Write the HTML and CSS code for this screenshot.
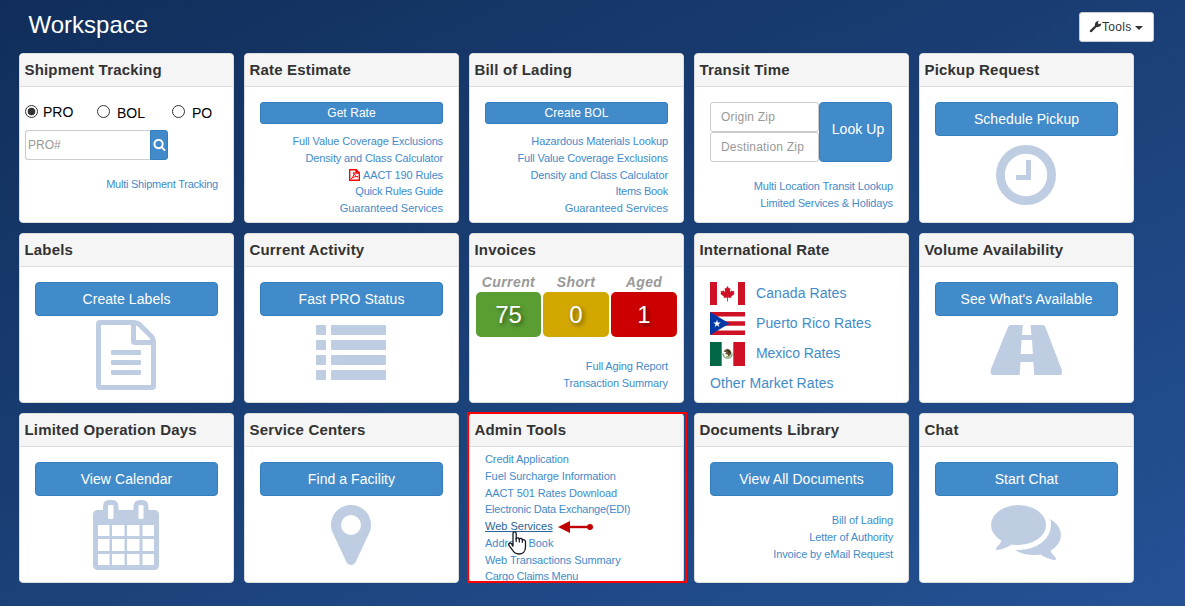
FILE: index.html
```html
<!DOCTYPE html>
<html lang="en">
<head>
<meta charset="utf-8">
<title>Workspace</title>
<link rel="stylesheet" href="styles.css">
</head>
<body>
<header class="topbar">
  <h1 class="title">Workspace</h1>
  <button class="tools"><svg class="wrench" viewBox="0 0 13 13"><path d="M1 10.2 6 5.6C5.6 3.2 7.2.9 9.8.7L8.8 2.6 9.7 4.2 12.3 3.6C12.4 6.1 10 7.7 7.6 7.1L2.8 12C1.6 12.8.2 11.4 1 10.2z"/></svg><span>Tools</span><span class="caret"></span></button>
</header>
<main class="grid">
  <section class="card">
    <h2 class="head">Shipment Tracking</h2>
    <div class="body tracking">
      <div class="radios">
        <label class="radio"><span class="dot on"></span>PRO</label>
        <label class="radio low"><span class="dot"></span>BOL</label>
        <label class="radio low last"><span class="dot"></span>PO</label>
      </div>
      <div class="search">
        <div class="field pro">PRO#</div>
        <button class="go"><svg viewBox="0 0 1792 1792"><path d="M1216 832q0-185-131.5-316.5t-316.5-131.5-316.5 131.5-131.5 316.5 131.5 316.5 316.5 131.5 316.5-131.5 131.5-316.5zm512 832q0 52-38 90t-90 38q-54 0-90-38l-343-342q-179 124-399 124-143 0-273.5-55.5t-225-150-150-225-55.5-273.5 55.5-273.5 150-225 225-150 273.5-55.5 273.5 55.5 225 150 150 225 55.5 273.5q0 220-124 399l343 343q37 37 37 90z"/></svg></button>
      </div>
      <div class="links multi"><a class="tight">Multi Shipment Tracking</a></div>
    </div>
  </section>
  <section class="card">
    <h2 class="head">Rate Estimate</h2>
    <div class="body">
      <button class="btn small">Get Rate</button>
      <div class="links">
        <a>Full Value Coverage Exclusions</a>
        <a>Density and Class Calculator</a>
        <a><svg class="pdf" viewBox="0 0 11 12"><path d="M.7.7H7.2L10.3 3.8V11.3H.7z M7 .9V4H10.2" stroke-width="1.4"/><path d="M2.2 9.8C4 8.8 5 6 4.9 3.2 5.2 6 6.6 7.6 8.9 7.8 6.4 7.3 4.4 7.8 2.2 9.8" stroke-width="1"/></svg>AACT 190 Rules</a>
        <a class="tight">Quick Rules Guide</a>
        <a class="loose">Guaranteed Services</a>
      </div>
    </div>
  </section>
  <section class="card">
    <h2 class="head">Bill of Lading</h2>
    <div class="body">
      <button class="btn small">Create BOL</button>
      <div class="links">
        <a>Hazardous Materials Lookup</a>
        <a>Full Value Coverage Exclusions</a>
        <a>Density and Class Calculator</a>
        <a class="tight">Items Book</a>
        <a class="loose">Guaranteed Services</a>
      </div>
    </div>
  </section>
  <section class="card">
    <h2 class="head">Transit Time</h2>
    <div class="body">
      <div class="transit">
        <div class="zips">
          <div class="field">Origin Zip</div>
          <div class="field">Destination Zip</div>
        </div>
        <button class="btn lookup">Look Up</button>
      </div>
      <div class="links pair">
        <a>Multi Location Transit Lookup</a>
        <a>Limited Services &amp; Holidays</a>
      </div>
    </div>
  </section>
  <section class="card">
    <h2 class="head">Pickup Request</h2>
    <div class="body">
      <button class="btn">Schedule Pickup</button>
      <svg class="icon" viewBox="0 0 71 70"><circle cx="35" cy="35" r="25.6" fill="none" stroke="#bfcde3" stroke-width="8.8"/><path d="M36 20h3q1 0 1 1v18q0 1-1 1H26q-1 0-1-1v-3q0-1 1-1h9V21q0-1 1-1z"/></svg>
    </div>
  </section>

  <section class="card">
    <h2 class="head">Labels</h2>
    <div class="body">
      <button class="btn">Create Labels</button>
      <svg class="icon" viewBox="0 0 71 70"><path fill-rule="evenodd" d="M9 0H43Q47 0 50 2.500L62.500 15Q65 18 65 22V66Q65 70 61 70H9Q5 70 5 66V4Q5 0 9 0zM10 5V65H60V25H44Q40 25 40 21V5zM45 5.500V20H59.500Q59 18.500 58 17.500L47.500 7Q46.500 6 45 5.500z"/><rect x="20" y="30" width="30" height="5" rx="1"/><rect x="20" y="40" width="30" height="5" rx="1"/><rect x="20" y="50" width="30" height="5" rx="1"/></svg>
    </div>
  </section>
  <section class="card">
    <h2 class="head">Current Activity</h2>
    <div class="body">
      <button class="btn">Fast PRO Status</button>
      <svg class="icon" viewBox="0 0 71 70"><rect y="5" width="10" height="10" rx="1"/><rect x="15" y="5" width="55" height="10" rx="1"/><rect y="20" width="10" height="10" rx="1"/><rect x="15" y="20" width="55" height="10" rx="1"/><rect y="35" width="10" height="10" rx="1"/><rect x="15" y="35" width="55" height="10" rx="1"/><rect y="50" width="10" height="10" rx="1"/><rect x="15" y="50" width="55" height="10" rx="1"/></svg>
    </div>
  </section>
  <section class="card">
    <h2 class="head">Invoices</h2>
    <div class="body invoices">
      <div class="stats">
        <div class="stat"><span class="stat-label">Current</span><span class="stat-box green">75</span></div>
        <div class="stat"><span class="stat-label">Short</span><span class="stat-box gold">0</span></div>
        <div class="stat"><span class="stat-label">Aged</span><span class="stat-box red">1</span></div>
      </div>
      <div class="links aging">
        <a>Full Aging Report</a>
        <a>Transaction Summary</a>
      </div>
    </div>
  </section>
  <section class="card">
    <h2 class="head">International Rate</h2>
    <div class="body rates">
      <a class="rate"><svg class="flag" viewBox="0 0 35 23"><path fill="#fff" d="M0 0h35v23H0z"/><path fill="#cf1126" d="M0 0h7v23H0zM28 0h7v23h-7zM17.500 4l1.500 2.600 1.400-.6-.5 4 2-1.800.5 1 2-.3-.6 2 .9.800-3.700 3 .3 1.400-3.400-.5v4h-.8v-4l-3.400.5.3-1.400-3.700-3 .9-.8-.6-2 2 .3.500-1 2 1.800-.5-4 1.400.6z"/></svg>Canada Rates</a>
      <a class="rate"><svg class="flag" viewBox="0 0 35 23"><path fill="#fff" d="M0 0h35v23H0z"/><path fill="#cf1126" d="M0 0h35v4.600H0zM0 9.200h35v4.600H0zM0 18.400h35V23H0z"/><path fill="#0038a8" d="M0 0l19.500 11.500L0 23z"/><path fill="#fff" d="M7 7.700l.95 2.700h2.850l-2.300 1.750.85 2.850L7 13.300 4.650 15l.85-2.850L3.200 10.400h2.850z"/></svg>Puerto Rico Rates</a>
      <a class="rate mexico"><svg class="flag tall" viewBox="0 0 35 24"><path fill="#fff" d="M0 0h35v24H0z"/><path fill="#006847" d="M0 0h11.700v24H0z"/><path fill="#cf1126" d="M23.300 0H35v24H23.300z"/><path fill="none" stroke="#6fa878" stroke-width="1.300" d="M13 11.500a4.600 4.600 0 0 0 9.200 0"/><path fill="#69512f" d="M13.500 9.500q2-3 5-2.600l2 1.600 1 2.500-1.200 2.500-2 1-.8-2-2.500-.4 1.500-1.600z"/><path fill="#2f3425" d="M17 7.500l3 1.500.8 2.500-2-.5z"/><path fill="#b8a36b" d="M16 14h3.500v1.300H16z"/></svg>Mexico Rates</a>
      <a class="rate">Other Market Rates</a>
    </div>
  </section>
  <section class="card">
    <h2 class="head">Volume Availability</h2>
    <div class="body">
      <button class="btn">See What's Available</button>
      <svg class="icon" viewBox="0 0 71 70"><path fill-rule="evenodd" d="M19.500 5H52Q53.500 5 54.200 6.500L70.500 49Q72 55 69.500 55H43.200L42.300 42H29.500L28.600 55H1.500Q-1.500 55 0 49L17 7Q17.700 5 19.500 5zM31.800 5L31 15H40.400L39.600 5zM30.600 20L29.700 34H41.900L41 20z"/></svg>
    </div>
  </section>

  <section class="card">
    <h2 class="head">Limited Operation Days</h2>
    <div class="body">
      <button class="btn">View Calendar</button>
      <svg class="icon" viewBox="0 0 71 70"><path fill-rule="evenodd" d="M7 10H12V7Q12 0 18 0H21Q27.500 0 27.500 7V10H42.500V7Q42.500 0 49 0H51Q57.500 0 57.500 7V10H63Q68 10 68 15V65Q68 70 63 70H7Q2 70 2 65V15Q2 10 7 10zM18 5Q17 5 17 6V18Q17 19 18 19H21Q22.500 19 22.500 18V6Q22.500 5 21 5zM48.500 5Q47.500 5 47.500 6V18Q47.500 19 48.500 19H51.500Q52.500 19 52.500 18V6Q52.500 5 51.500 5zM7 25V36H18.500V25zM21 25V36H33.500V25zM36 25V36H48.500V25zM51.500 25V36H63V25zM7 39V51H18.500V39zM21 39V51H33.500V39zM36 39V51H48.500V39zM51.500 39V51H63V39zM7 54V65H18.500V54zM21 54V65H33.500V54zM36 54V65H48.500V54zM51.500 54V65H63V54z"/></svg>
    </div>
  </section>
  <section class="card">
    <h2 class="head">Service Centers</h2>
    <div class="body">
      <button class="btn">Find a Facility</button>
      <svg class="icon" viewBox="0 0 71 70"><path transform="scale(.0390625)" d="M1152 640q0-106-75-181t-181-75-181 75-75 181 75 181 181 75 181-75 75-181zm256 0q0 109-33 179l-364 774q-16 33-47.500 52t-67.500 19-67.500-19-46.500-52l-365-774q-33-70-33-179 0-212 150-362t362-150 362 150 150 362z"/></svg>
    </div>
  </section>
  <section class="card marked">
    <h2 class="head">Admin Tools</h2>
    <div class="body admin">
      <a>Credit Application</a>
      <a>Fuel Surcharge Information</a>
      <a>AACT 501 Rates Download</a>
      <a class="tight">Electronic Data Exchange(EDI)</a>
      <a class="hovered loose">Web Services</a>
      <a class="loose">Address Book</a>
      <a>Web Transactions Summary</a>
      <a class="tight">Cargo Claims Menu</a>
    </div>
    <div class="frame"></div>
    <svg class="arrow" viewBox="0 0 36 12"><path d="M0 6L12 0V12z"/><path d="M11 4.800h21v2.400H11z"/><circle cx="32" cy="6" r="3"/></svg>
    <svg class="hand" viewBox="0 0 20 24"><path d="M5 15.500V2.500C5 .3 8.200.3 8.200 2.500V7.500C9.500 6.300 11 6.800 11.300 8 12.500 7 14 7.400 14.400 8.800 16 8.200 17.500 9.200 17.500 11V16C17.500 20.500 14.500 23 11 23 7.500 23 5.500 21 4.300 18.800L1 14.500C-.2 12.500 2.300 11.300 3.500 12.700z" fill="#fff" stroke="#171722" stroke-width="1.300"/><path d="M8.200 7v4M11.300 8v3.500M14.400 8.800v3" fill="none" stroke="#171722" stroke-width="1.200"/></svg>
  </section>
  <section class="card">
    <h2 class="head">Documents Library</h2>
    <div class="body">
      <button class="btn">View All Documents</button>
      <div class="links docs">
        <a>Bill of Lading</a>
        <a>Letter of Authority</a>
        <a>Invoice by eMail Request</a>
      </div>
    </div>
  </section>
  <section class="card">
    <h2 class="head">Chat</h2>
    <div class="body">
      <button class="btn">Start Chat</button>
      <svg class="icon" viewBox="0 0 71 70"><path transform="translate(0 -5) scale(.0390625)" d="M1408 768q0 139-94 257t-256.500 186.500-353.500 68.500q-86 0-176-16-124 88-278 128-36 9-86 16h-3q-11 0-20.500-8t-11.500-21q-1-3-1-6.500t.5-6.500 2-6l2.500-5 3.500-5.500 4-5 4.500-5 4-4.500q5-6 23-25t26-29.500 22.500-29 25-38.500 20.500-44q-124-72-195-177t-71-224q0-139 94-257t256.500-186.500 353.500-68.500 353.500 68.500 256.500 186.500 94 257zm384 256q0 120-71 224.500t-195 176.500q10 24 20.500 44t25 38.500 22.500 29 26 29.500 23 25q1 1 4 4.500t4.500 5 4 5 3.500 5.500l2.500 5 2 6 .5 6.500-1 6.500q-3 14-13 22t-22 7q-50-7-86-16-154-40-278-128-90 16-176 16-271 0-472-132 58 4 88 4 161 0 309-45t264-129q125-92 192-212t67-254q0-77-23-152 129 71 204 178t75 230z"/></svg>
    </div>
  </section>
</main>
</body>
</html>
```
FILE: styles.css
```css
* { box-sizing: border-box; }
body {
  margin: 0;
  height: 606px;
  overflow: hidden;
  padding: 0 31px 0 19px;
  font-family: "Liberation Sans", Arial, sans-serif;
  font-size: 14px;
  color: #333;
  background: linear-gradient(155deg, #112e5a, #245295);
}
button { font-family: inherit; margin: 0; padding: 0; }
.topbar { display: flex; justify-content: space-between; height: 53px; }
.title { margin: 8px 0 0 9.5px; font-size: 24px; line-height: 34px; font-weight: 400; color: #fff; }
.tools {
  display: flex; align-items: center;
  width: 75px; height: 30px; margin-top: 12px; padding-left: 9px;
  border: 1px solid #ccc; border-radius: 3px; background: #fff;
  font-size: 12px; letter-spacing: .3px; color: #333;
}
.wrench { width: 13px; height: 13px; fill: #333; margin-top: -2px; }
.caret { margin: 2px 0 0 3px; border: 4px solid transparent; border-top-color: #333; border-bottom: 0; }

.grid { display: grid; grid-template-columns: repeat(5, 215px); grid-auto-rows: 170px; gap: 10px; }
.card { display: flex; flex-direction: column; border: 1px solid #ddd; border-radius: 4px; background: #fff; }
.head {
  margin: 0; padding-left: 4.5px; height: 33px; flex: none;
  border-bottom: 1px solid #ddd; border-radius: 3px 3px 0 0; background: #f5f5f5;
  font-size: 15px; line-height: 32px; letter-spacing: .18px; white-space: nowrap;
}
.body { display: flex; flex-direction: column; padding: 15px 15px 0; }
.btn {
  height: 34px; flex: none; border: 1px solid #357ebd; border-radius: 4px;
  background: #428bca; color: #fff; font-size: 14px; line-height: 32px; letter-spacing: .06px;
}
.btn.small { height: 22px; border-radius: 3px; font-size: 12px; line-height: 20px; }
.icon { width: 71px; height: 70px; margin: 4px 0 0 56px; flex: none; fill: #bfcde3; overflow: visible; }
.card a { color: #428bca; white-space: nowrap; }
.links { display: flex; flex-direction: column; align-items: flex-end; margin-top: 9px; font-size: 11px; line-height: 16.75px; letter-spacing: -.13px; }
.tight { letter-spacing: -.24px; }
.loose { letter-spacing: 0; }
.pair { margin-top: 16px; }
.docs { margin-top: 16px; }
.pdf { width: 11px; height: 12px; margin-right: 3px; vertical-align: -2px; fill: none; stroke: #f00; }

.tracking { padding: 17px 15px 0 5px; }
.radios { display: flex; font-size: 14px; color: #000; height: 26px; }
.radio { display: flex; align-items: flex-start; gap: 5px; width: 72px; line-height: 16px; }
.radio.low { gap: 7px; width: 75px; line-height: 18px; }
.radio.last { width: auto; }
.dot { width: 13px; height: 13px; margin-top: 1px; border: 1px solid #333; border-radius: 50%; background: #fff; }
.dot.on { background: radial-gradient(circle, #333 0 3.5px, #fff 4.2px); }
.search { display: flex; }
.field {
  height: 30px; padding-left: 10px; border: 1px solid #ccc; border-radius: 3px;
  background: #fff; color: #999; font-size: 12px; line-height: 28px; letter-spacing: .2px;
}
.pro { width: 125px; padding-left: 2px; border-right: 0; border-radius: 3px 0 0 3px; letter-spacing: 0; }
.go { display: flex; justify-content: center; padding-top: 7px; width: 18px; height: 30px; border: 1px solid #357ebd; border-radius: 0 3px 3px 0; background: #428bca; }
.go svg { width: 13px; height: 13px; fill: #fff; flex: none; }
.multi { margin-top: 16px; }

.transit { display: flex; }
.zips { width: 109px; }
.lookup { width: 73px; height: 60px; padding: 0 0 6px 5px; }

.invoices { padding: 7px 6px 0; }
.stats { display: grid; grid-template-columns: 65px 66px 66px; gap: 2px; }
.stat { display: flex; flex-direction: column; text-align: center; }
.stat-label { height: 18px; line-height: 17px; font-size: 14px; font-weight: 700; font-style: italic; letter-spacing: .4px; color: #999; }
.stat-box { height: 45px; border-radius: 5px; color: #fff; font-size: 24px; line-height: 46px; text-shadow: 2px 2px 4px rgba(0, 0, 0, .5); }
.green { background: #5a9e33; }
.gold { background: #d1a700; }
.red { background: #c00; }
.aging { margin: 21px 9px 0 0; }

.rate { display: flex; align-items: flex-start; height: 30px; line-height: 22px; letter-spacing: .08px; }
.rate.mexico { letter-spacing: -.06px; }
.flag { width: 35px; height: 23px; margin-right: 11px; flex: none; }
.flag.tall { height: 24px; }

.marked { position: relative; }
.admin { padding-top: 4px; height: 135px; overflow: hidden; font-size: 11px; line-height: 16.75px; letter-spacing: -.1px; }
.card a.hovered { align-self: flex-start; color: #2a6496; text-decoration: underline; }
.frame { position: absolute; left: -3px; top: -2px; width: 220px; height: 171px; border: 2px solid #f00; }
.arrow { position: absolute; left: 88px; top: 107px; width: 36px; height: 12px; fill: #c00000; }
.hand { position: absolute; left: 38px; top: 117px; width: 20px; height: 24px; }
```
